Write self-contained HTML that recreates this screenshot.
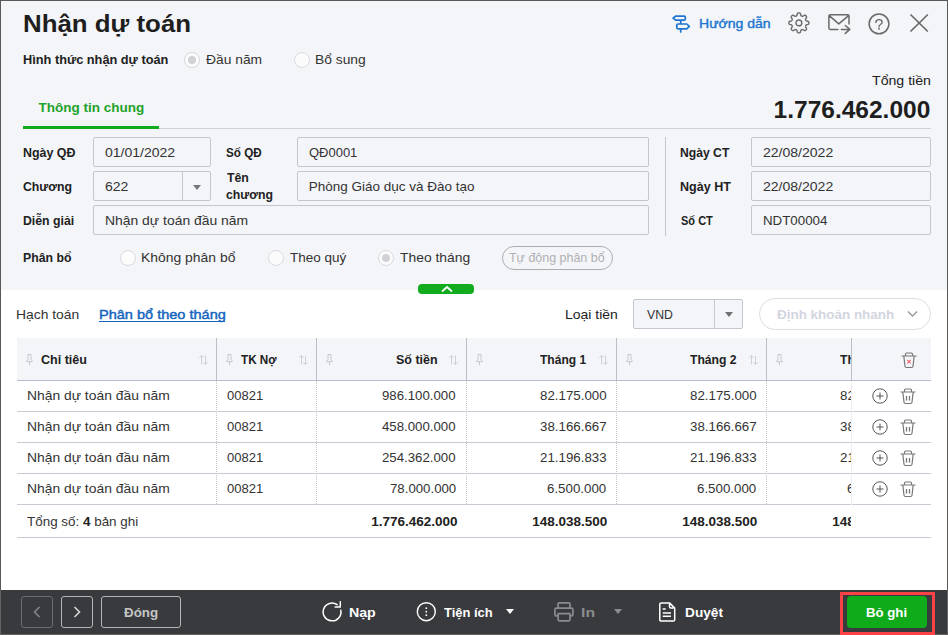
<!DOCTYPE html>
<html lang="vi">
<head>
<meta charset="utf-8">
<title>Nhận dự toán</title>
<style>
*{box-sizing:border-box;margin:0;padding:0}
html,body{width:948px;height:635px;overflow:hidden;background:#f4f5f8}
body{font-family:"Liberation Sans",sans-serif;font-size:13px;color:#212121;position:relative}
.a{position:absolute}
.b{font-weight:bold}
.t{position:absolute;white-space:nowrap;line-height:20px;transform-origin:0 0;display:block}
.t b{font-weight:bold;color:#212121}
#frame{position:absolute;left:0;top:0;width:948px;height:635px;border:1px solid #5a5757;border-bottom:0;z-index:50}
#top{position:absolute;left:0;top:0;width:948px;height:290px;background:#f4f5f8}
#bottom{position:absolute;left:0;top:290px;width:948px;height:300px;background:#fff}
#footer{position:absolute;left:0;top:590px;width:948px;height:45px;background:#393a3d}
.inp{position:absolute;height:30px;border:1px solid #c4c6cf;border-radius:2px;background:#f4f5f8}
.radio{position:absolute;width:16px;height:16px;border:1px solid #d9dadf;border-radius:50%;background:#fbfbfc}
.radio.on::after{content:"";position:absolute;left:3px;top:3px;width:8px;height:8px;border-radius:50%;background:#d1d2d7}
.hl{position:absolute;left:17px;width:914px;height:1px;background:#c9cad3}
.vl{position:absolute;width:0;border-left:1px dotted #c4c5cc}
.pin{position:absolute;top:354px;width:8px;height:12px}
.srt{position:absolute;top:355px;width:10px;height:10px}
.ic{position:absolute;overflow:visible}
.fb{position:absolute;top:596px;height:32px;border:1px solid #b4b4b6;border-radius:3px}
.tri{position:absolute;width:0;height:0;border-left:4.5px solid transparent;border-right:4.5px solid transparent;border-top:5px solid #666}
</style>
</head>
<body>
<div id="top"></div>
<div id="bottom"></div>
<div id="footer"></div>
<svg class="ic" style="left:671px;top:13px" width="20" height="21" viewBox="0 0 20 21"><path d="M4.600 3.200h8.500q1.200 0 1.200 1.200v1.500q0 1.200-1.200 1.200h-8.500l-2.600-1.950zM7 11h8.800l2.500 2.400-2.500 2.400h-8.800q-1.200 0-1.200-1.200v-2.400q0-1.200 1.200-1.200zM9.700 7.100v3.900M9.700 15.800v3.200" fill="none" stroke="#1b75d0" stroke-width="1.700" stroke-linejoin="round" stroke-linecap="round"/></svg>
<svg class="ic" style="left:788px;top:12px" width="22" height="22" viewBox="0 0 22 22"><path d="M10.90 0.90 L11.16 0.91 L11.42 0.94 L11.68 1.00 L11.93 1.11 L12.16 1.30 L12.37 1.62 L12.53 2.09 L12.66 2.64 L12.77 3.11 L12.90 3.45 L13.05 3.66 L13.21 3.80 L13.38 3.90 L13.55 3.99 L13.73 4.06 L13.91 4.13 L14.10 4.20 L14.29 4.25 L14.50 4.26 L14.76 4.22 L15.08 4.07 L15.50 3.82 L15.97 3.52 L16.42 3.30 L16.79 3.22 L17.10 3.25 L17.35 3.35 L17.57 3.49 L17.78 3.65 L17.97 3.83 L18.15 4.02 L18.31 4.23 L18.45 4.45 L18.55 4.70 L18.58 5.01 L18.50 5.38 L18.28 5.83 L17.98 6.30 L17.73 6.72 L17.58 7.04 L17.54 7.30 L17.55 7.51 L17.60 7.70 L17.67 7.89 L17.74 8.07 L17.81 8.25 L17.90 8.42 L18.00 8.59 L18.14 8.75 L18.35 8.90 L18.69 9.03 L19.16 9.14 L19.71 9.27 L20.18 9.43 L20.50 9.64 L20.69 9.87 L20.80 10.12 L20.86 10.38 L20.89 10.64 L20.90 10.90 L20.89 11.16 L20.86 11.42 L20.80 11.68 L20.69 11.93 L20.50 12.16 L20.18 12.37 L19.71 12.53 L19.16 12.66 L18.69 12.77 L18.35 12.90 L18.14 13.05 L18.00 13.21 L17.90 13.38 L17.81 13.55 L17.74 13.73 L17.67 13.91 L17.60 14.10 L17.55 14.29 L17.54 14.50 L17.58 14.76 L17.73 15.08 L17.98 15.50 L18.28 15.97 L18.50 16.42 L18.58 16.79 L18.55 17.10 L18.45 17.35 L18.31 17.57 L18.15 17.78 L17.97 17.97 L17.78 18.15 L17.57 18.31 L17.35 18.45 L17.10 18.55 L16.79 18.58 L16.42 18.50 L15.97 18.28 L15.50 17.98 L15.08 17.73 L14.76 17.58 L14.50 17.54 L14.29 17.55 L14.10 17.60 L13.91 17.67 L13.73 17.74 L13.55 17.81 L13.38 17.90 L13.21 18.00 L13.05 18.14 L12.90 18.35 L12.77 18.69 L12.66 19.16 L12.53 19.71 L12.37 20.18 L12.16 20.50 L11.93 20.69 L11.68 20.80 L11.42 20.86 L11.16 20.89 L10.90 20.90 L10.64 20.89 L10.38 20.86 L10.12 20.80 L9.87 20.69 L9.64 20.50 L9.43 20.18 L9.27 19.71 L9.14 19.16 L9.03 18.69 L8.90 18.35 L8.75 18.14 L8.59 18.00 L8.42 17.90 L8.25 17.81 L8.07 17.74 L7.89 17.67 L7.70 17.60 L7.51 17.55 L7.30 17.54 L7.04 17.58 L6.72 17.73 L6.30 17.98 L5.83 18.28 L5.38 18.50 L5.01 18.58 L4.70 18.55 L4.45 18.45 L4.23 18.31 L4.02 18.15 L3.83 17.97 L3.65 17.78 L3.49 17.57 L3.35 17.35 L3.25 17.10 L3.22 16.79 L3.30 16.42 L3.52 15.97 L3.82 15.50 L4.07 15.08 L4.22 14.76 L4.26 14.50 L4.25 14.29 L4.20 14.10 L4.13 13.91 L4.06 13.73 L3.99 13.55 L3.90 13.38 L3.80 13.21 L3.66 13.05 L3.45 12.90 L3.11 12.77 L2.64 12.66 L2.09 12.53 L1.62 12.37 L1.30 12.16 L1.11 11.93 L1.00 11.68 L0.94 11.42 L0.91 11.16 L0.90 10.90 L0.91 10.64 L0.94 10.38 L1.00 10.12 L1.11 9.87 L1.30 9.64 L1.62 9.43 L2.09 9.27 L2.64 9.14 L3.11 9.03 L3.45 8.90 L3.66 8.75 L3.80 8.59 L3.90 8.42 L3.99 8.25 L4.06 8.07 L4.13 7.89 L4.20 7.70 L4.25 7.51 L4.26 7.30 L4.22 7.04 L4.07 6.72 L3.82 6.30 L3.52 5.83 L3.30 5.38 L3.22 5.01 L3.25 4.70 L3.35 4.45 L3.49 4.23 L3.65 4.02 L3.83 3.83 L4.02 3.65 L4.23 3.49 L4.45 3.35 L4.70 3.25 L5.01 3.22 L5.38 3.30 L5.83 3.52 L6.30 3.82 L6.72 4.07 L7.04 4.22 L7.30 4.26 L7.51 4.25 L7.70 4.20 L7.89 4.13 L8.07 4.06 L8.25 3.99 L8.42 3.90 L8.59 3.80 L8.75 3.66 L8.90 3.45 L9.03 3.11 L9.14 2.64 L9.27 2.09 L9.43 1.62 L9.64 1.30 L9.87 1.11 L10.12 1.00 L10.38 0.94 L10.64 0.91Z" fill="none" stroke="#6a6a6a" stroke-width="1.400" stroke-linejoin="round"/><circle cx="10.900" cy="10.900" r="2.900" fill="none" stroke="#6a6a6a" stroke-width="1.400"/></svg>
<svg class="ic" style="left:827px;top:13px" width="24" height="22" viewBox="0 0 24 22"><path d="M10.800 16.400h-7.600q-1.300 0-1.300-1.300v-12q0-1.300 1.300-1.300h17.500q1.300 0 1.300 1.300v7.800M2.200 2.600l9.600 8.300 9.800-8.300M14.400 16.400h8.200M18.300 12.500l4.500 3.900-4.500 4" fill="none" stroke="#6a6a6a" stroke-width="1.500" stroke-linejoin="round" stroke-linecap="round"/></svg>
<svg class="ic" style="left:867px;top:12px" width="24" height="24" viewBox="0 0 24 24"><circle cx="12" cy="11.850" r="9.900" fill="none" stroke="#6a6a6a" stroke-width="1.500"/><path d="M8.900 10.400q0-2.800 3.100-2.800 3.100 0 3.100 2.500 0 1.500-1.600 2.400-1.500 0.800-1.500 2.300" fill="none" stroke="#6a6a6a" stroke-width="1.400" stroke-linecap="round"/><circle cx="12" cy="16.800" r="0.950" fill="#6a6a6a"/></svg>
<svg class="ic" style="left:909px;top:13px" width="20" height="20" viewBox="0 0 20 20"><path d="M1.500 1.500l17.300 17M18.800 1.500l-17.300 17" fill="none" stroke="#666" stroke-width="1.600"/></svg>
<div class="radio on" style="left:184px;top:52px"></div>
<div class="radio" style="left:294px;top:52px"></div>
<div class="a" style="left:23px;top:128px;width:908px;height:1px;background:#d0d1d6"></div>
<div class="a" style="left:23px;top:126px;width:136px;height:3px;background:#13ab1e"></div>
<div class="inp" style="left:93px;top:137px;width:118px"></div>
<div class="inp" style="left:297px;top:137px;width:352px"></div>
<div class="inp" style="left:93px;top:171px;width:118px"></div>
<div class="inp" style="left:297px;top:171px;width:352px"></div>
<div class="inp" style="left:93px;top:205px;width:556px"></div>
<div class="inp" style="left:751px;top:137px;width:180px"></div>
<div class="inp" style="left:751px;top:171px;width:180px"></div>
<div class="inp" style="left:751px;top:205px;width:180px"></div>
<div class="a" style="left:182px;top:172px;width:1px;height:28px;background:#c6c7cc"></div>
<div class="tri" style="left:192.7px;top:184.5px;border-top-color:#77787c"></div>
<div class="a" style="left:665px;top:137px;width:1px;height:99px;background:#c6c7cc"></div>
<div class="radio" style="left:120px;top:250px"></div>
<div class="radio" style="left:268px;top:250px"></div>
<div class="radio on" style="left:378px;top:250px"></div>
<div class="a" style="left:502px;top:246px;width:111px;height:24px;border:1px solid #adadb0;border-radius:12px"></div>
<div class="a" style="left:418px;top:284px;width:56px;height:10px;background:#13ab1e;border-radius:4px;z-index:5"><svg class="ic" style="left:23px;top:2px" width="12" height="7" viewBox="0 0 12 7"><path d="M1 5.500l5-4.500 5 4.500" fill="none" stroke="#fff" stroke-width="1.700"/></svg></div>
<div class="inp" style="left:633px;top:299px;width:110px"></div>
<div class="a" style="left:714px;top:300px;width:1px;height:28px;background:#c6c7cc"></div>
<div class="tri" style="left:724.6px;top:312.2px;border-top-color:#707073"></div>
<div class="a" style="left:759px;top:298px;width:172px;height:32px;border:1px solid #dcdee6;border-radius:16px;background:#fff"></div>
<svg class="ic" style="left:907px;top:310px" width="11" height="8" viewBox="0 0 11 8"><path d="M1 1.500l4.500 4.500 4.500-4.500" fill="none" stroke="#999" stroke-width="1.400"/></svg>
<div class="a" style="left:17px;top:338px;width:914px;height:42px;background:#f4f5f8"></div>
<div class="a" style="left:216px;top:338px;width:1px;height:42px;background:#bdbec8"></div>
<div class="vl" style="left:216px;top:381px;height:123px"></div>
<div class="a" style="left:316px;top:338px;width:1px;height:42px;background:#bdbec8"></div>
<div class="vl" style="left:316px;top:381px;height:123px"></div>
<div class="a" style="left:466px;top:338px;width:1px;height:42px;background:#bdbec8"></div>
<div class="vl" style="left:466px;top:381px;height:123px"></div>
<div class="a" style="left:616px;top:338px;width:1px;height:42px;background:#bdbec8"></div>
<div class="vl" style="left:616px;top:381px;height:123px"></div>
<div class="a" style="left:766px;top:338px;width:1px;height:42px;background:#bdbec8"></div>
<div class="vl" style="left:766px;top:381px;height:123px"></div>
<div class="hl" style="top:380px;background:#b9bbc8"></div>
<div class="hl" style="top:411px"></div>
<div class="hl" style="top:442px"></div>
<div class="hl" style="top:473px"></div>
<div class="hl" style="top:504px"></div>
<div class="hl" style="top:537px"></div>
<svg class="pin" style="left:26px" viewBox="0 0 8 12"><path d="M2 0.500h3v5l1.300 1.600v0.600h-5.600v-0.600l1.300-1.600zM3.500 7.700v3.500" fill="none" stroke="#c6c8d0" stroke-width="1"/></svg>
<svg class="srt" style="left:199px" viewBox="0 0 10 10"><path d="M2.500 9.500v-9M0.300 2.800l2.200-2.300 2.200 2.300M6.500 0.500v9M4.300 7.200l2.200 2.300 2.200-2.300" fill="none" stroke="#cdd0d8" stroke-width="1"/></svg>
<svg class="pin" style="left:225.5px" viewBox="0 0 8 12"><path d="M2 0.500h3v5l1.300 1.600v0.600h-5.600v-0.600l1.300-1.600zM3.500 7.700v3.500" fill="none" stroke="#c6c8d0" stroke-width="1"/></svg>
<svg class="srt" style="left:299px" viewBox="0 0 10 10"><path d="M2.500 9.500v-9M0.300 2.800l2.200-2.300 2.200 2.300M6.500 0.500v9M4.300 7.200l2.200 2.300 2.200-2.300" fill="none" stroke="#cdd0d8" stroke-width="1"/></svg>
<svg class="pin" style="left:325.5px" viewBox="0 0 8 12"><path d="M2 0.500h3v5l1.300 1.600v0.600h-5.600v-0.600l1.300-1.600zM3.500 7.700v3.500" fill="none" stroke="#c6c8d0" stroke-width="1"/></svg>
<svg class="srt" style="left:449px" viewBox="0 0 10 10"><path d="M2.500 9.500v-9M0.300 2.800l2.200-2.300 2.200 2.300M6.500 0.500v9M4.300 7.200l2.200 2.300 2.200-2.300" fill="none" stroke="#cdd0d8" stroke-width="1"/></svg>
<svg class="pin" style="left:475.5px" viewBox="0 0 8 12"><path d="M2 0.500h3v5l1.300 1.600v0.600h-5.600v-0.600l1.300-1.600zM3.500 7.700v3.500" fill="none" stroke="#c6c8d0" stroke-width="1"/></svg>
<svg class="srt" style="left:599px" viewBox="0 0 10 10"><path d="M2.500 9.500v-9M0.300 2.800l2.200-2.300 2.200 2.300M6.500 0.500v9M4.300 7.200l2.200 2.300 2.200-2.300" fill="none" stroke="#cdd0d8" stroke-width="1"/></svg>
<svg class="pin" style="left:625.5px" viewBox="0 0 8 12"><path d="M2 0.500h3v5l1.300 1.600v0.600h-5.600v-0.600l1.300-1.600zM3.500 7.700v3.500" fill="none" stroke="#c6c8d0" stroke-width="1"/></svg>
<svg class="srt" style="left:749px" viewBox="0 0 10 10"><path d="M2.500 9.500v-9M0.300 2.800l2.200-2.300 2.200 2.300M6.500 0.500v9M4.300 7.200l2.200 2.300 2.200-2.300" fill="none" stroke="#cdd0d8" stroke-width="1"/></svg>
<svg class="pin" style="left:775.5px" viewBox="0 0 8 12"><path d="M2 0.500h3v5l1.300 1.600v0.600h-5.600v-0.600l1.300-1.600zM3.500 7.700v3.500" fill="none" stroke="#c6c8d0" stroke-width="1"/></svg>
<svg class="srt" style="left:899px" viewBox="0 0 10 10"><path d="M2.500 9.500v-9M0.300 2.800l2.200-2.300 2.200 2.300M6.500 0.500v9M4.300 7.200l2.200 2.300 2.200-2.300" fill="none" stroke="#cdd0d8" stroke-width="1"/></svg>
<div class="a" style="left:0;top:338px;width:851px;height:200px;overflow:hidden"><div class="a" style="left:0;top:-338px;width:948px;height:635px">
<span class="t b" style="left:840.16px;top:350px;font-size:13.5px;color:#212121;transform:scaleX(0.9008);">Tháng 3</span>
<span class="t" style="left:839.55px;top:386px;font-size:13.5px;color:#333;transform:scaleX(0.9852);">82.175.000</span>
<span class="t" style="left:839.59px;top:417px;font-size:13.5px;color:#333;transform:scaleX(0.9852);">38.166.667</span>
<span class="t" style="left:839.58px;top:448px;font-size:13.5px;color:#333;transform:scaleX(0.9852);">21.196.833</span>
<span class="t" style="left:846.58px;top:479px;font-size:13.5px;color:#333;transform:scaleX(0.9852);">6.500.000</span>
<span class="t b" style="left:832.19px;top:512px;font-size:13.5px;color:#212121;">148.038.500</span>
</div></div>
<div class="a" style="left:851px;top:338px;width:80px;height:42px;background:#f4f5f8"></div>
<div class="a" style="left:851px;top:381px;width:80px;height:156px;background:#fff"></div>
<div class="a" style="left:852px;top:411px;width:79px;height:1px;background:#c9cad3"></div>
<div class="a" style="left:852px;top:442px;width:79px;height:1px;background:#c9cad3"></div>
<div class="a" style="left:852px;top:473px;width:79px;height:1px;background:#c9cad3"></div>
<div class="a" style="left:852px;top:504px;width:79px;height:1px;background:#c9cad3"></div>
<div class="a" style="left:851px;top:338px;width:1px;height:42px;background:#bdbec8"></div>
<div class="a" style="left:851px;top:381px;width:1px;height:123px;background:#eeeef2"></div>
<svg class="ic" style="left:900.5px;top:351.5px" width="16" height="16" viewBox="0 0 16 16"><path d="M0.500 4h15M4.500 4v-1.800q0-1.200 1.200-1.200h4.600q1.200 0 1.200 1.200v1.800M2.800 4l1.200 10.200q0.150 1.300 1.400 1.300h5.200q1.250 0 1.400-1.300l1.200-10.200" fill="none" stroke="#777" stroke-width="1.200"/><path d="M6.300 8l3.400 3.400M9.700 8l-3.400 3.400" stroke="#f26a72" stroke-width="1.100" fill="none"/></svg>
<svg class="ic" style="left:872px;top:388px" width="16" height="16" viewBox="0 0 16 16"><circle cx="8" cy="8" r="7.200" fill="none" stroke="#555" stroke-width="1"/><path d="M4.500 8h7M8 4.500v7" stroke="#555" stroke-width="1" fill="none"/></svg>
<svg class="ic" style="left:899.5px;top:388px" width="16" height="16" viewBox="0 0 16 16"><path d="M0.500 4h15M4.500 4v-1.800q0-1.200 1.200-1.200h4.600q1.200 0 1.200 1.200v1.800M2.800 4l1.200 10.200q0.150 1.300 1.400 1.300h5.200q1.250 0 1.400-1.300l1.200-10.200" fill="none" stroke="#777" stroke-width="1.200"/><path d="M6.500 8v4.500M9.500 8v4.500" stroke="#777" stroke-width="1.300" fill="none"/></svg>
<svg class="ic" style="left:872px;top:419px" width="16" height="16" viewBox="0 0 16 16"><circle cx="8" cy="8" r="7.200" fill="none" stroke="#555" stroke-width="1"/><path d="M4.500 8h7M8 4.500v7" stroke="#555" stroke-width="1" fill="none"/></svg>
<svg class="ic" style="left:899.5px;top:419px" width="16" height="16" viewBox="0 0 16 16"><path d="M0.500 4h15M4.500 4v-1.800q0-1.200 1.200-1.200h4.600q1.200 0 1.200 1.200v1.800M2.800 4l1.200 10.200q0.150 1.300 1.400 1.300h5.200q1.250 0 1.400-1.300l1.200-10.200" fill="none" stroke="#777" stroke-width="1.200"/><path d="M6.500 8v4.500M9.500 8v4.500" stroke="#777" stroke-width="1.300" fill="none"/></svg>
<svg class="ic" style="left:872px;top:450px" width="16" height="16" viewBox="0 0 16 16"><circle cx="8" cy="8" r="7.200" fill="none" stroke="#555" stroke-width="1"/><path d="M4.500 8h7M8 4.500v7" stroke="#555" stroke-width="1" fill="none"/></svg>
<svg class="ic" style="left:899.5px;top:450px" width="16" height="16" viewBox="0 0 16 16"><path d="M0.500 4h15M4.500 4v-1.800q0-1.200 1.200-1.200h4.600q1.200 0 1.200 1.200v1.800M2.800 4l1.200 10.200q0.150 1.300 1.400 1.300h5.200q1.250 0 1.400-1.300l1.200-10.200" fill="none" stroke="#777" stroke-width="1.200"/><path d="M6.500 8v4.500M9.500 8v4.500" stroke="#777" stroke-width="1.300" fill="none"/></svg>
<svg class="ic" style="left:872px;top:481px" width="16" height="16" viewBox="0 0 16 16"><circle cx="8" cy="8" r="7.200" fill="none" stroke="#555" stroke-width="1"/><path d="M4.500 8h7M8 4.500v7" stroke="#555" stroke-width="1" fill="none"/></svg>
<svg class="ic" style="left:899.5px;top:481px" width="16" height="16" viewBox="0 0 16 16"><path d="M0.500 4h15M4.500 4v-1.800q0-1.200 1.200-1.200h4.600q1.200 0 1.200 1.200v1.800M2.800 4l1.200 10.200q0.150 1.300 1.400 1.300h5.200q1.250 0 1.400-1.300l1.200-10.200" fill="none" stroke="#777" stroke-width="1.200"/><path d="M6.500 8v4.500M9.500 8v4.500" stroke="#777" stroke-width="1.300" fill="none"/></svg>
<div class="fb" style="left:21px;width:32px;border-color:#6c6d70"></div>
<svg class="ic" style="left:33px;top:606px" width="8" height="12" viewBox="0 0 8 12"><path d="M6.500 1l-5 5 5 5" fill="none" stroke="#85868a" stroke-width="1.600"/></svg>
<div class="fb" style="left:61px;width:32px"></div>
<svg class="ic" style="left:73px;top:606px" width="8" height="12" viewBox="0 0 8 12"><path d="M1.500 1l5 5-5 5" fill="none" stroke="#d8d8d8" stroke-width="1.600"/></svg>
<div class="fb" style="left:101px;width:80px"></div>
<svg class="ic" style="left:321px;top:600px" width="23" height="23" viewBox="0 0 23 23"><path d="M19.800 10.300a8.900 8.900 0 1 1-3.600-5.600M19.300 1.800v5.200h-5.200" fill="none" stroke="#fff" stroke-width="1.500" stroke-linecap="round" stroke-linejoin="round"/></svg>
<svg class="ic" style="left:416px;top:601px" width="21" height="21" viewBox="0 0 21 21"><circle cx="10.300" cy="10.700" r="9" fill="none" stroke="#fff" stroke-width="1.400"/><circle cx="10.300" cy="7.200" r="0.900" fill="#fff"/><circle cx="10.300" cy="10.700" r="0.900" fill="#fff"/><circle cx="10.300" cy="14.200" r="0.900" fill="#fff"/></svg>
<div class="tri" style="left:506px;top:608.8px;border-width:5px 4px 0 4px;border-top-color:#fff"></div>
<svg class="ic" style="left:553px;top:601px" width="22" height="22" viewBox="0 0 22 22"><path d="M5.100 7.200v-4.100q0-1.200 1.200-1.200h9.500q1.200 0 1.200 1.200v4.100M5.100 14.900h-1.700q-1.500 0-1.500-1.500v-4.700q0-1.500 1.500-1.500h15q1.500 0 1.500 1.500v4.700q0 1.500-1.500 1.500h-1.700M5.100 12.700h11.900v5.900q0 1.200-1.200 1.200h-9.500q-1.200 0-1.200-1.200z" fill="none" stroke="#8b8c8f" stroke-width="1.700" stroke-linejoin="round"/></svg>
<div class="tri" style="left:614px;top:608.8px;border-width:5px 4px 0 4px;border-top-color:#8b8c8f"></div>
<svg class="ic" style="left:658px;top:601px" width="19" height="22" viewBox="0 0 19 22"><path d="M3.200 1.900h8.300l5.200 5.200v11.600q0 1.400-1.400 1.400h-12.100q-1.400 0-1.400-1.400v-15.400q0-1.400 1.400-1.400zM11.500 1.900v3.800q0 1.400 1.400 1.400h3.800M4.700 8.100h3M4.700 11.900h8.300M4.700 15.300h8.300" fill="none" stroke="#fff" stroke-width="1.500" stroke-linejoin="round"/></svg>
<div class="a" style="left:840px;top:592px;width:95px;height:43px;border:3px solid #fb4347;z-index:2"></div>
<div class="a" style="left:847px;top:596px;width:80px;height:32px;border-radius:4px;background:#10ab1b"></div>
<div class="a" style="left:0;top:633.6px;width:948px;height:1.4px;background:#656363"></div>
<div class="a" style="left:0;top:590px;width:1px;height:45px;background:#656363;z-index:60"></div>
<div class="a" style="left:947px;top:590px;width:1px;height:45px;background:#656363;z-index:60"></div>
<div class="a" style="left:99px;top:321px;width:126px;height:1px;background:#1565c0"></div>
<span class="t b" style="left:22.55px;top:14px;font-size:24.5px;color:#1e1e1e;transform:scaleX(1.0550);">Nhận dự toán</span>
<span class="t" style="left:699.43px;top:14px;font-size:12.7px;color:#1b75d0;transform:scaleX(1.1062);-webkit-text-stroke:0.38px #1b75d0;">Hướng dẫn</span>
<span class="t b" style="left:22.91px;top:50px;font-size:13.5px;color:#212121;transform:scaleX(0.9449);">Hình thức nhận dự toán</span>
<span class="t" style="left:205.77px;top:50px;font-size:13.5px;color:#333;transform:scaleX(1.0243);">Đầu năm</span>
<span class="t" style="left:315.05px;top:50px;font-size:13.5px;color:#333;transform:scaleX(1.0230);">Bổ sung</span>
<span class="t" style="left:872.43px;top:71px;font-size:13.5px;color:#212121;transform:scaleX(1.0470);">Tổng tiền</span>
<span class="t b" style="left:773.62px;top:100px;font-size:24.5px;color:#1e1e1e;">1.776.462.000</span>
<span class="t b" style="left:38.56px;top:98px;font-size:13.5px;color:#1fa32a;">Thông tin chung</span>
<span class="t b" style="left:22.73px;top:143px;font-size:13.5px;color:#212121;transform:scaleX(0.9203);">Ngày QĐ</span>
<span class="t b" style="left:22.96px;top:177px;font-size:13.5px;color:#212121;transform:scaleX(0.9099);">Chương</span>
<span class="t b" style="left:22.74px;top:211px;font-size:13.5px;color:#212121;transform:scaleX(0.9099);">Diễn giải</span>
<span class="t b" style="left:226.26px;top:143px;font-size:13.5px;color:#212121;transform:scaleX(0.8635);">Số QĐ</span>
<span class="t b" style="left:226.96px;top:168px;font-size:13.5px;color:#212121;transform:scaleX(0.9099);">Tên</span>
<span class="t b" style="left:226.48px;top:185px;font-size:13.5px;color:#212121;transform:scaleX(0.9099);">chương</span>
<span class="t b" style="left:680.45px;top:143px;font-size:13.5px;color:#212121;transform:scaleX(0.9004);">Ngày CT</span>
<span class="t b" style="left:680.43px;top:177px;font-size:13.5px;color:#212121;transform:scaleX(0.9300);">Ngày HT</span>
<span class="t b" style="left:680.60px;top:211px;font-size:13.5px;color:#212121;transform:scaleX(0.8159);">Số CT</span>
<span class="t b" style="left:22.54px;top:248px;font-size:13.5px;color:#212121;transform:scaleX(0.9096);">Phân bổ</span>
<span class="t" style="left:105.38px;top:143px;font-size:13.5px;color:#333;transform:scaleX(1.0375);">01/01/2022</span>
<span class="t" style="left:105.26px;top:177px;font-size:13.5px;color:#333;transform:scaleX(1.0390);">622</span>
<span class="t" style="left:105.34px;top:211px;font-size:13.5px;color:#333;transform:scaleX(1.0305);">Nhận dự toán đầu năm</span>
<span class="t" style="left:308.94px;top:143px;font-size:13.5px;color:#333;transform:scaleX(0.9606);">QĐ0001</span>
<span class="t" style="left:308.66px;top:177px;font-size:13.5px;color:#333;">Phòng Giáo dục và Đào tạo</span>
<span class="t" style="left:763.28px;top:143px;font-size:13.5px;color:#333;transform:scaleX(1.0390);">22/08/2022</span>
<span class="t" style="left:763.28px;top:177px;font-size:13.5px;color:#333;transform:scaleX(1.0390);">22/08/2022</span>
<span class="t" style="left:763.08px;top:211px;font-size:13.5px;color:#333;transform:scaleX(0.9863);">NDT00004</span>
<span class="t" style="left:141.34px;top:248px;font-size:13.5px;color:#333;transform:scaleX(1.0310);">Không phân bổ</span>
<span class="t" style="left:290.03px;top:248px;font-size:13.5px;color:#333;">Theo quý</span>
<span class="t" style="left:400.33px;top:248px;font-size:13.5px;color:#333;transform:scaleX(1.0271);">Theo tháng</span>
<span class="t" style="left:509.43px;top:248px;font-size:13.5px;color:#b0b0b3;transform:scaleX(0.9227);">Tự động phân bổ</span>
<span class="t" style="left:16.24px;top:305px;font-size:13.5px;color:#333;transform:scaleX(1.0284);">Hạch toán</span>
<span class="t" style="left:98.64px;top:305px;font-size:13.5px;color:#1565c0;transform:scaleX(1.0758);-webkit-text-stroke:0.45px #1565c0;">Phân bổ theo tháng</span>
<span class="t" style="left:564.83px;top:305px;font-size:13.5px;color:#212121;transform:scaleX(1.0340);">Loại tiền</span>
<span class="t" style="left:647.03px;top:305px;font-size:13.5px;color:#333;transform:scaleX(0.9063);">VND</span>
<span class="t b" style="left:776.99px;top:305px;font-size:13.5px;color:#d3d5df;transform:scaleX(0.9956);">Định khoản nhanh</span>
<span class="t b" style="left:41.25px;top:350px;font-size:13.5px;color:#212121;transform:scaleX(0.9292);">Chỉ tiêu</span>
<span class="t b" style="left:241.15px;top:350px;font-size:13.5px;color:#212121;transform:scaleX(0.8666);">TK Nợ</span>
<span class="t b" style="left:395.52px;top:350px;font-size:13.5px;color:#212121;transform:scaleX(0.9230);">Số tiền</span>
<span class="t b" style="left:540.26px;top:350px;font-size:13.5px;color:#212121;transform:scaleX(0.8909);">Tháng 1</span>
<span class="t b" style="left:690.16px;top:350px;font-size:13.5px;color:#212121;transform:scaleX(0.9008);">Tháng 2</span>
<span class="t" style="left:26.54px;top:386px;font-size:13.5px;color:#333;transform:scaleX(1.0276);">Nhận dự toán đầu năm</span>
<span class="t" style="left:226.93px;top:386px;font-size:13.5px;color:#333;transform:scaleX(0.9642);">00821</span>
<span class="t" style="left:382.20px;top:386px;font-size:13.5px;color:#333;transform:scaleX(0.9799);">986.100.000</span>
<span class="t" style="left:539.55px;top:386px;font-size:13.5px;color:#333;transform:scaleX(0.9852);">82.175.000</span>
<span class="t" style="left:689.55px;top:386px;font-size:13.5px;color:#333;transform:scaleX(0.9852);">82.175.000</span>
<span class="t" style="left:26.54px;top:417px;font-size:13.5px;color:#333;transform:scaleX(1.0276);">Nhận dự toán đầu năm</span>
<span class="t" style="left:226.93px;top:417px;font-size:13.5px;color:#333;transform:scaleX(0.9642);">00821</span>
<span class="t" style="left:382.20px;top:417px;font-size:13.5px;color:#333;transform:scaleX(0.9799);">458.000.000</span>
<span class="t" style="left:539.59px;top:417px;font-size:13.5px;color:#333;transform:scaleX(0.9852);">38.166.667</span>
<span class="t" style="left:689.59px;top:417px;font-size:13.5px;color:#333;transform:scaleX(0.9852);">38.166.667</span>
<span class="t" style="left:26.54px;top:448px;font-size:13.5px;color:#333;transform:scaleX(1.0276);">Nhận dự toán đầu năm</span>
<span class="t" style="left:226.93px;top:448px;font-size:13.5px;color:#333;transform:scaleX(0.9642);">00821</span>
<span class="t" style="left:382.20px;top:448px;font-size:13.5px;color:#333;transform:scaleX(0.9799);">254.362.000</span>
<span class="t" style="left:539.58px;top:448px;font-size:13.5px;color:#333;transform:scaleX(0.9852);">21.196.833</span>
<span class="t" style="left:689.58px;top:448px;font-size:13.5px;color:#333;transform:scaleX(0.9852);">21.196.833</span>
<span class="t" style="left:26.54px;top:479px;font-size:13.5px;color:#333;transform:scaleX(1.0276);">Nhận dự toán đầu năm</span>
<span class="t" style="left:226.93px;top:479px;font-size:13.5px;color:#333;transform:scaleX(0.9642);">00821</span>
<span class="t" style="left:389.90px;top:479px;font-size:13.5px;color:#333;transform:scaleX(0.9799);">78.000.000</span>
<span class="t" style="left:546.58px;top:479px;font-size:13.5px;color:#333;transform:scaleX(0.9852);">6.500.000</span>
<span class="t" style="left:696.58px;top:479px;font-size:13.5px;color:#333;transform:scaleX(0.9852);">6.500.000</span>
<span class="t" style="left:27.33px;top:512px;font-size:13.5px;color:#333;transform:scaleX(0.9943);">Tổng số: <b>4</b> bản ghi</span>
<span class="t b" style="left:371.16px;top:512px;font-size:13.5px;color:#212121;">1.776.462.000</span>
<span class="t b" style="left:532.19px;top:512px;font-size:13.5px;color:#212121;">148.038.500</span>
<span class="t b" style="left:682.19px;top:512px;font-size:13.5px;color:#212121;">148.038.500</span>
<span class="t b" style="left:124.09px;top:603px;font-size:13.5px;color:#c6c6c6;transform:scaleX(0.9880);">Đóng</span>
<span class="t b" style="left:349.03px;top:603px;font-size:13.5px;color:#fff;transform:scaleX(1.0498);">Nạp</span>
<span class="t b" style="left:444.36px;top:603px;font-size:13.5px;color:#fff;transform:scaleX(0.9585);">Tiện ích</span>
<span class="t b" style="left:581.41px;top:603px;font-size:13.5px;color:#8b8c8f;transform:scaleX(1.1682);">In</span>
<span class="t b" style="left:684.56px;top:603px;font-size:13.5px;color:#fff;transform:scaleX(1.0129);">Duyệt</span>
<span class="t b" style="left:866.39px;top:603px;font-size:13.5px;color:#fff;transform:scaleX(0.9788);z-index:3">Bỏ ghi</span>
<div id="frame"></div>
</body>
</html>
